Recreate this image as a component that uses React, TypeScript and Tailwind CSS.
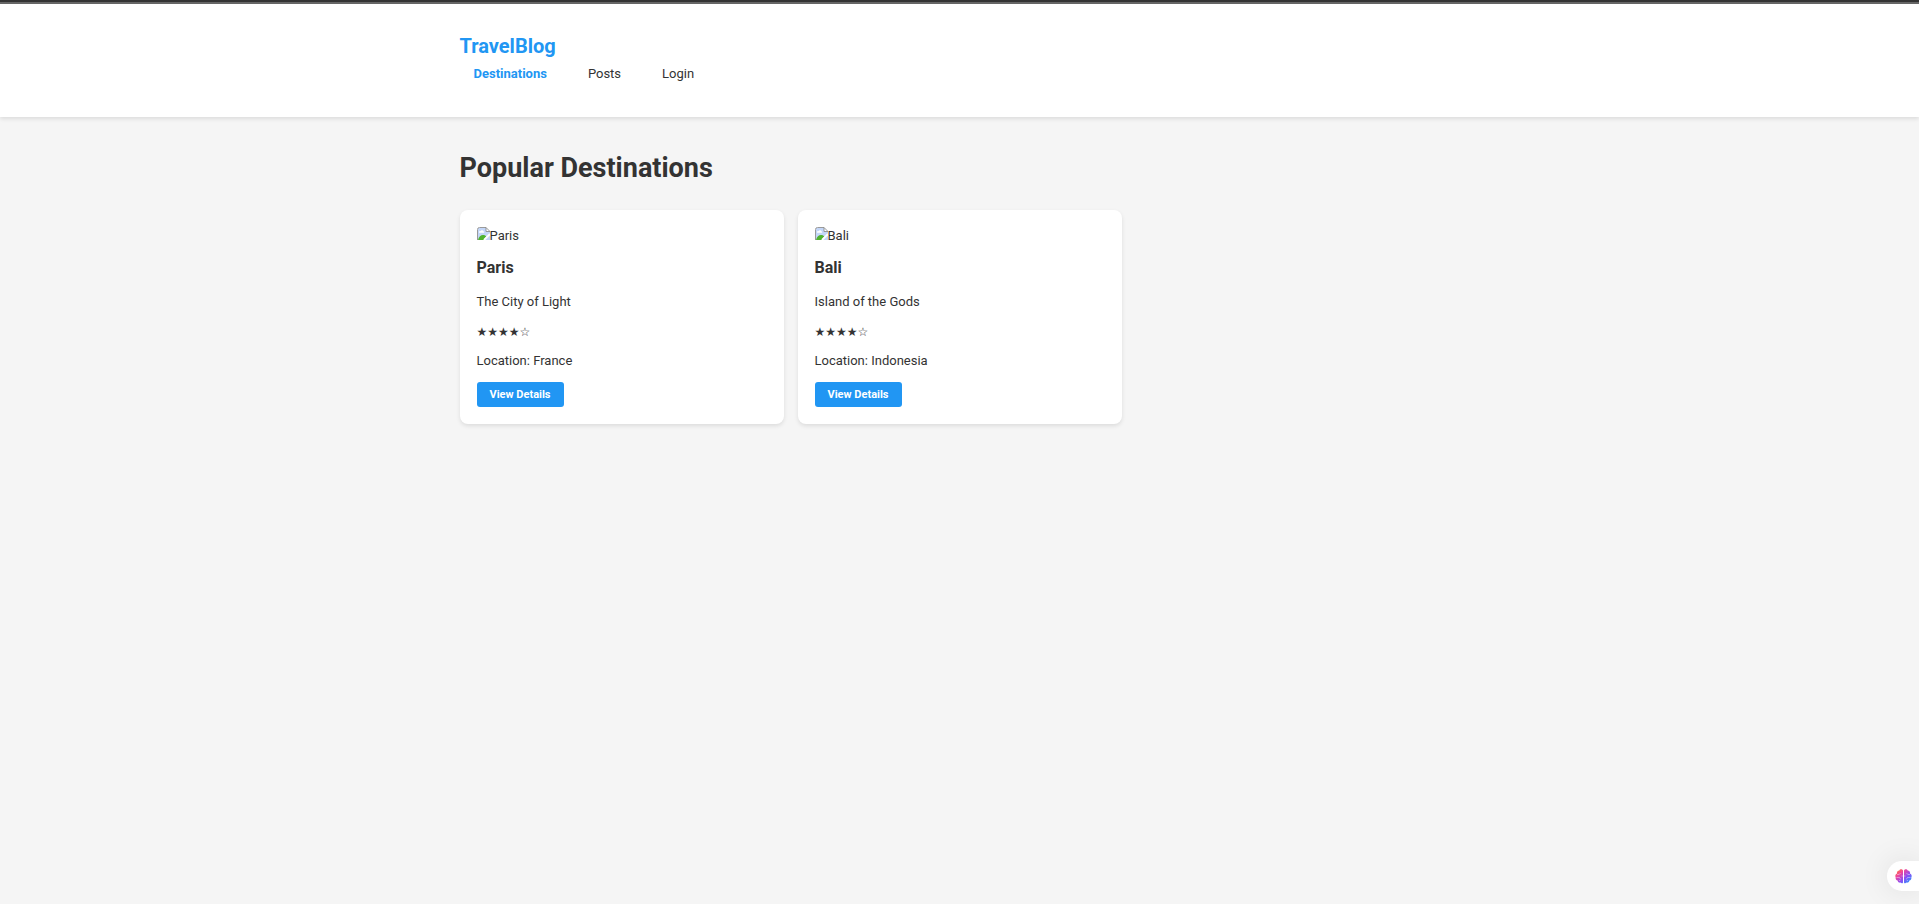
type Destination = {
  name: string;
  description: string;
  rating: number;
  location: string;
};

const destinations: Destination[] = [
  { name: "Paris", description: "The City of Light", rating: 4, location: "France" },
  { name: "Bali", description: "Island of the Gods", rating: 4, location: "Indonesia" },
];

function MissingImage({ alt }: { alt: string }) {
  return (
    <div className="flex h-4 items-start">
      <svg width="13" height="13" viewBox="0 0 13 13" aria-hidden="true" className="shrink-0">
        <path d="M1 1h8l4 4v3l-5 5H1z" fill="#c3d6f8" />
        <path d="M2 5.400c0-1 1-1.500 1.700-1.200C4 3 6 3 6.300 4.200c1 0 1.200 1.200.4 1.500H2z" fill="#fff" />
        <path d="M1 13c.8-3 2.800-4.900 5-4.900 1.600 0 2.700.6 3.400 1.500L6.500 13z" fill="#4fb32f" />
        <path d="M.5 13V2.500Q.5.500 2.500.5H9" fill="none" stroke="#9a9a9a" />
        <path d="M9 .5v4h4z" fill="#fff" stroke="#8d8d8d" strokeWidth=".9" />
        <path d="M13 7 7 13" stroke="#fff" strokeWidth="1.800" />
        <path d="M13 8.500V13H8.500z" fill="#c3d6f8" />
      </svg>
      <span className="leading-[18px]">{alt}</span>
    </div>
  );
}

function DestinationCard({ name, description, rating, location }: Destination) {
  return (
    <article className="flex flex-col items-start rounded-lg bg-white p-[17px] shadow-[0_2px_4px_rgba(0,0,0,0.1)]">
      <MissingImage alt={name} />
      <h2 className="mt-[15px] text-base leading-5 font-bold">{name}</h2>
      <p className="mt-3 leading-6">{description}</p>
      <p
        className="mt-2 text-xs leading-5 font-['DejaVu_Sans',sans-serif]"
        aria-label={`${rating} out of 5`}
      >
        {"★".repeat(rating) + "☆".repeat(5 - rating)}
      </p>
      <p className="mt-[7px] leading-6">Location: {location}</p>
      <button
        type="button"
        className="mt-[9px] h-[25px] rounded-[3px] bg-[#2196f3] px-[13px] text-[11px] leading-4 font-bold text-white"
      >
        View Details
      </button>
    </article>
  );
}

function BrainIcon() {
  return (
    <svg width="17" height="15" viewBox="0 0 17 15" aria-hidden="true">
      <defs>
        <linearGradient id="brain" x1="0" y1="0" x2="1" y2="1">
          <stop offset="0" stopColor="#ff8a1f" />
          <stop offset=".3" stopColor="#f0459c" />
          <stop offset=".6" stopColor="#8b4df5" />
          <stop offset="1" stopColor="#12a8ff" />
        </linearGradient>
      </defs>
      <path
        d="M8 1.500C7.300-.1 4.800 0 4.300 1.500 2.600 1.600 1.600 3 2 4.400.4 5-.1 7 .7 8.200c-.4 1.700.5 3 1.900 3.200.3 1.700 1.700 2.500 3 2.200.8 1.200 2.200.9 2.400-.2zM9 1.500c.7-1.600 3.200-1.500 3.700 0 1.700.1 2.700 1.500 2.300 2.900 1.600.6 2.100 2.600 1.300 3.800.4 1.700-.5 3-1.900 3.200-.3 1.700-1.700 2.500-3 2.200-.8 1.200-2.200.9-2.400-.2z"
        fill="url(#brain)"
      />
      <path
        d="M2 5.500h2.200L5.500 4M1.500 8.500h3l1 1.500M6.500 7H8M15 5.500h-2.200L11.500 4M15.500 8.500h-3l-1 1.500M9 7h1.500M4 11.800l1.500-.8M13 11.800l-1.500-.8"
        fill="none"
        stroke="#fff"
        strokeOpacity=".5"
        strokeWidth=".8"
      />
    </svg>
  );
}

export default function App() {
  return (
    <div className="min-h-screen bg-[#f5f5f5] font-[Roboto,sans-serif] text-[13px] text-[#333]">
      <header className="border-t-2 border-[#333] bg-white shadow-[0_2px_4px_rgba(0,0,0,0.1)]">
        <div className="h-0.5 bg-[#666]" />
        <div className="mx-auto max-w-[1000px] pt-[30px] pb-[30px]">
          <a href="#home" className="block w-fit text-xl leading-6 font-bold text-[#2196f3]">
            TravelBlog
          </a>
          <nav aria-label="Main" className="mt-0.5 flex gap-[13px] leading-[27px]">
            <a href="#destinations" className="px-3.5 font-bold text-[#2196f3]">
              Destinations
            </a>
            <a href="#posts" className="px-3.5">
              Posts
            </a>
            <a href="#login" className="px-3.5">
              Login
            </a>
          </nav>
        </div>
      </header>
      <main className="mx-auto max-w-[1000px] pt-[33px]">
        <h1 className="text-[27px] leading-9 font-bold">Popular Destinations</h1>
        <div className="mt-6 grid grid-cols-3 gap-3.5">
          {destinations.map((destination) => (
            <DestinationCard key={destination.name} {...destination} />
          ))}
        </div>
      </main>
      <button
        type="button"
        aria-label="Open assistant"
        className="fixed right-0 bottom-[13px] flex h-[30px] items-center rounded-l-full bg-white pr-[7px] pl-2 shadow-[0_0_30px_rgba(0,0,0,0.1)]"
      >
        <BrainIcon />
      </button>
    </div>
  );
}
